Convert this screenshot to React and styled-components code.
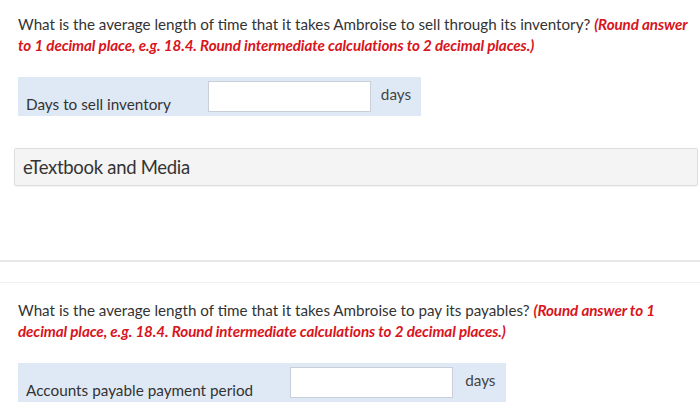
import React from "react";
import styled, { createGlobalStyle } from "styled-components";

const Global = createGlobalStyle`
  html, body { margin: 0; padding: 0; background: #fff; }
  body { font-family: Lato, "Open Sans", sans-serif; color: #333; }
`;

const Page = styled.div`
  width: 700px;
`;

const Section = styled.section`
  padding: ${(p) => p.$pad};
`;

const Question = styled.p`
  margin: 0;
  font-size: 15.2px;
  line-height: 21px;
  color: #333;
`;

const Hint = styled.em`
  color: #d8141c;
  font-weight: 700;
  font-style: italic;
  letter-spacing: -0.1px;
`;

const AnswerRow = styled.div`
  display: inline-flex;
  align-items: flex-end;
  margin-top: 21px;
  padding: 4px 10px 4px 8px;
  background: #dfe9f5;
`;

const Label = styled.span`
  font-size: 15.3px;
  line-height: 16px;
  color: #333;
  margin-right: ${(p) => p.$gap}px;
  white-space: nowrap;
`;

const Input = styled.input`
  box-sizing: border-box;
  width: 163px;
  height: 31px;
  border: 1px solid #c9ced8;
  background: #fff;
  margin: 0;
  padding: 0 6px;
  font: inherit;
`;

const Unit = styled.span`
  align-self: flex-start;
  margin: 3px 0 0 ${(p) => p.$gap}px;
  font-size: 15.3px;
  line-height: 21px;
  color: #444;
`;

const MediaBox = styled.div`
  box-sizing: border-box;
  margin: 32px 0 0 -4px;
  height: 38px;
  display: flex;
  align-items: center;
  padding: 0 8px 0 8px;
  background: #f4f4f4;
  border: 1px solid #dedede;
  border-radius: 2px;
  box-shadow: 0 1px 1px rgba(0, 0, 0, 0.05);
  font-size: 18.5px;
  color: #333;
  letter-spacing: -0.3px;
`;

const Divider = styled.hr`
  margin: 0;
  border: 0;
  border-top: ${(p) => p.$w}px solid ${(p) => p.$c};
  height: 0;
`;

const Spacer = styled.div`
  height: ${(p) => p.$h}px;
`;

export default function App() {
  return (
    <Page>
      <Global />
      <Section $pad="14px 2px 0 18px">
        <Question>
          What is the average length of time that it takes Ambroise to sell through its inventory?{" "}
          <Hint>
            (Round answer to 1 decimal place, e.g. 18.4. Round intermediate calculations to 2 decimal places.)
          </Hint>
        </Question>
        <AnswerRow>
          <Label $gap={37}>Days to sell inventory</Label>
          <Input type="text" />
          <Unit $gap={10}>days</Unit>
        </AnswerRow>
        <MediaBox>eTextbook and Media</MediaBox>
      </Section>
      <Spacer $h={74} />
      <Divider $w={2} $c="#e8e8e8" />
      <Spacer $h={20} />
      <Divider $w={1} $c="#f0f0f0" />
      <Section $pad="17px 2px 0 18px">
        <Question>
          What is the average length of time that it takes Ambroise to pay its payables?{" "}
          <Hint>
            (Round answer to 1 decimal place, e.g. 18.4. Round intermediate calculations to 2 decimal places.)
          </Hint>
        </Question>
        <AnswerRow>
          <Label $gap={37}>Accounts payable payment period</Label>
          <Input type="text" />
          <Unit $gap={12}>days</Unit>
        </AnswerRow>
      </Section>
    </Page>
  );
}
